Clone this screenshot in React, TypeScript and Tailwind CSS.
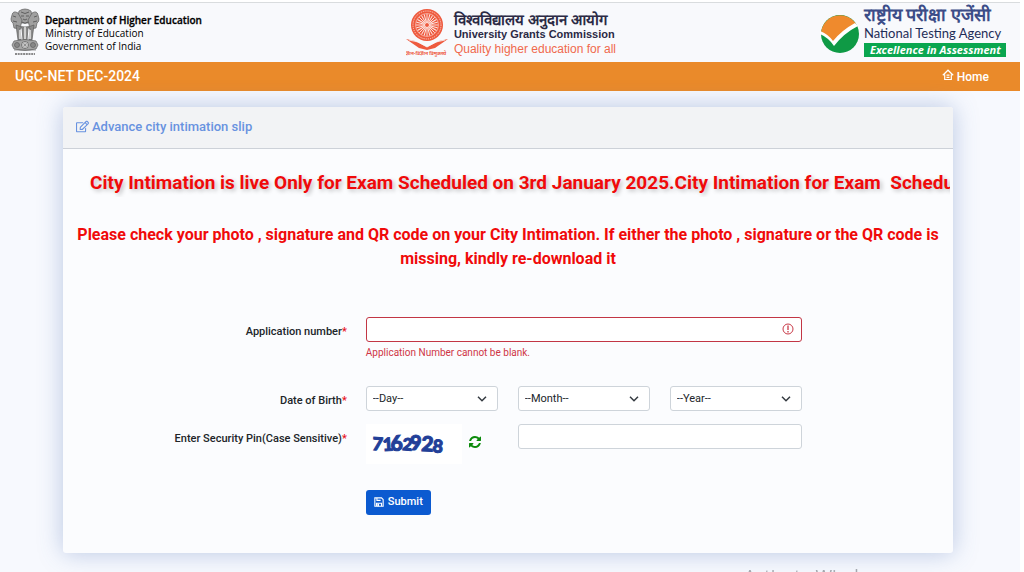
import { useState } from "react";
import { FaRegEdit } from "react-icons/fa";

const spokes = Array.from({ length: 24 }, (_, i) => i * 15);

const captcha = [
  { char: "7", x: 6, y: 26, size: 18, turn: 4 },
  { char: "1", x: 17, y: 27, size: 18, turn: -3 },
  { char: "6", x: 25, y: 27, size: 21, turn: -4 },
  { char: "2", x: 36, y: 26, size: 17, turn: 5 },
  { char: "9", x: 44, y: 26, size: 20, turn: 0 },
  { char: "2", x: 55, y: 27, size: 21, turn: 3 },
  { char: "8", x: 66, y: 28, size: 18, turn: 6 },
];

function Emblem() {
  return (
    <svg viewBox="0 0 32 48" className="h-12 w-8 shrink-0" fill="#a0a0a0" stroke="#5f5f5f" strokeWidth="0.7">
      <path d="M10 3q6-4 12 0l1 5-2 7H11L9 8z" />
      <path d="M9 5Q4 2 3 7l-1 4q0 3 2 4l1 5 6 1 2-9z" />
      <path d="M23 5q5-3 6 2l1 4q0 3-2 4l-1 5-6 1-2-9z" />
      <path d="M12 4q4 3 8 0M12 8h3M17 8h3M14 11q2 2 4 0M13 14q3 3 6 0M4 8l3 1M28 8l-3 1M4 13l4 1M28 13l-4 1" fill="none" stroke="#444" />
      <path d="M7 17l2 15h3l-1-12h2l1 12h4l1-12h2l-1 12h3l2-15q-9 4-18 0z" fill="#8a8a8a" />
      <path d="M11 22v9M16 19v12M21 22v9" stroke="#eee" strokeWidth="1.4" />
      <path d="M5 33q11-3 22 0l2 4-2 4q-11 3-22 0l-2-4z" fill="#a5a5a5" />
      <circle cx="16" cy="37" r="3.5" fill="#ddd" stroke="#555" />
      <path d="M16 33.500v7M12.500 37h7M13.500 34.500l5 5M18.500 34.500l-5 5" strokeWidth="0.4" />
      <circle cx="8" cy="37" r="2.5" fill="#888" />
      <circle cx="24" cy="37" r="2.5" fill="#888" />
      <path d="M5 42h22" stroke="#777" />
      <path d="M6 46h20" stroke="#666" strokeWidth="1.5" strokeDasharray="2 0.7" />
    </svg>
  );
}

function UgcLogo() {
  return (
    <svg viewBox="0 0 42 48" className="h-12 w-[42px] shrink-0" fill="none" stroke="#ee5a3e">
      <path d="M0 30l9 2 12 6 12-6 9-2-13 9-8 2-8-2z" fill="#ee5a3e" stroke="none" />
      <circle cx="21" cy="16" r="16" fill="#ee5a3e" stroke="none" />
      <circle cx="21" cy="16" r="14" stroke="#fbd9d2" strokeWidth="0.9" strokeDasharray="1.2 1" />
      <circle cx="21" cy="16" r="11.5" stroke="#fbd9d2" strokeWidth="0.6" />
      {spokes.map((deg) => (
        <path
          key={deg}
          d="M21 13V5"
          stroke="#fdeae6"
          strokeWidth="0.9"
          transform={`rotate(${deg} 21 16)`}
        />
      ))}
      <circle cx="21" cy="16" r="2.5" fill="#ee5a3e" stroke="#fff" strokeWidth="0.9" />
      <path d="M3 31l9 2 9 5 9-5 9-2" stroke="#f8f9fc" strokeWidth="0.8" />
      <text
        x="20"
        y="46"
        textAnchor="middle"
        fontSize="5"
        fontWeight="700"
        fill="#ee5a3e"
        stroke="none"
        fontFamily="'Noto Sans', sans-serif">
        ज्ञान-विज्ञान विमुक्तये
      </text>
    </svg>
  );
}

function NtaLogo() {
  return (
    <svg viewBox="0 0 40 40" className="size-10 shrink-0">
      <circle cx="20" cy="20" r="19" fill="#0f9a45" />
      <path d="M1 20a19 19 0 0 1 35-10Q22 18 13 29 8 22 1 20z" fill="#ef8a2d" />
      <path d="M0 17q8 3 13 10Q22 16 35 9l3 3Q24 19 14 32 9 24 0 20z" fill="#fff" />
    </svg>
  );
}

function Header() {
  return (
    <header className="flex h-[60px] items-start justify-between border-t border-[#d9dcde] bg-[#f8f9fc] pr-3.5 pl-[9px]">
      <div className="flex pt-[5px]">
        <Emblem />
        <div className="pt-1.5 pl-1 font-['Open_Sans',sans-serif] text-[10px] leading-[13px] text-black">
          <p className="font-semibold [-webkit-text-stroke:0.3px_black]">Department of Higher Education</p>
          <p>Ministry of Education</p>
          <p>Government of India</p>
        </div>
      </div>

      <div className="flex gap-1.5 pt-1.5">
        <UgcLogo />
        <div className="pt-[3px] font-['Liberation_Sans',sans-serif] text-[11px] leading-[15px] text-[#2b2a45]">
          <p className="text-[15px] font-semibold">विश्वविद्यालय अनुदान आयोग</p>
          <p className="font-bold">University Grants Commission</p>
          <p className="text-[12px] leading-[14px] text-[#f0694c]">Quality higher education for all</p>
        </div>
      </div>

      <div className="flex gap-1">
        <div className="pt-[11px]">
          <NtaLogo />
        </div>
        <div className="w-[142px] pt-1 text-[#25356f]">
          <p className="text-[18px] leading-4 font-semibold whitespace-nowrap text-[#3c4d88]">राष्ट्रीय परीक्षा एजेंसी</p>
          <p className="font-['Lato',sans-serif] text-[13px] leading-5 whitespace-nowrap text-[#1f2d57]">
            National Testing Agency
          </p>
          <p className="h-3.5 bg-[#0aa64f] px-1.5 font-['Noto_Sans',sans-serif] text-[11px] leading-3.5 font-bold whitespace-nowrap text-white italic">
            Excellence in Assessment
          </p>
        </div>
      </div>
    </header>
  );
}

function HomeIcon() {
  return (
    <svg viewBox="0 0 12 12" className="mb-1 size-3" fill="none" stroke="currentColor" strokeWidth="1.2">
      <path d="M.8 6.200L6 1.200l5.200 5M2.700 5.500v5h6.600v-5" />
      <path d="M4.500 6.200h3M4.500 8.300h3" />
    </svg>
  );
}

function RefreshIcon() {
  return (
    <svg viewBox="0 0 1536 1536" className="size-3" fill="currentColor">
      <path d="M1511 928q0 5-1 7-64 268-268 434.500T764 1536q-146 0-282.500-55T238 1324l-129 129q-19 19-45 19t-45-19-19-45V960q0-26 19-45t45-19h448q26 0 45 19t19 45-19 45l-137 137q71 66 161 102t187 36q134 0 250-65t186-179q11-17 53-117 8-23 30-23h192q13 0 22.500 9.500t9.500 22.500zm25-800v448q0 26-19 45t-45 19h-448q-26 0-45-19t-19-45 19-45l138-138Q969 256 768 256q-134 0-250 65T332 500q-11 17-53 117-8 23-30 23H50q-13 0-22.500-9.500T18 608v-7q65-268 270-434.500T768 0q146 0 284 55.500T1297 212l130-129q19-19 45-19t45 19 19 45z" />
    </svg>
  );
}

function SaveIcon() {
  return (
    <svg viewBox="0 0 12 12" className="mb-0.5 size-2.5" fill="none" stroke="currentColor" strokeWidth="1.3">
      <path d="M1 1h8l2 2v8H1zM3.500 1v3h4.500M3 11V7.500h6V11" />
      <path d="M4 8h2v3H4z" fill="currentColor" stroke="none" />
    </svg>
  );
}

function Label({ id, text }: { id: string; text: string }) {
  return (
    <label htmlFor={id} className="pt-[7px] pr-px text-right text-[11px] leading-4 font-medium text-[#212529]">
      {text}
      <span className="text-[#e8101c]">*</span>
    </label>
  );
}

function DateSelect({ id, name }: { id: string; name: string }) {
  return (
    <div className="relative">
      <select
        id={id}
        aria-label={name}
        className="block h-[25px] w-full appearance-none rounded-[3px] border border-[#ced4da] bg-white pt-px pl-1.5 text-[11px] text-[#212529]">
        <option>--{name}--</option>
      </select>
      <svg
        viewBox="0 0 10 6"
        className="pointer-events-none absolute top-2.5 right-[11px] h-1.5 w-2.5"
        fill="none"
        stroke="#343a40"
        strokeWidth="1.5">
        <path d="M1 .8l4 4 4-4" />
      </svg>
    </div>
  );
}

function SlipForm() {
  const [appNo, setAppNo] = useState("");
  const [pin, setPin] = useState("");

  return (
    <form className="grid grid-cols-[32%_49%] gap-x-[18px] pb-[38px]" onSubmit={(e) => e.preventDefault()}>
      <Label id="appno" text="Application number" />
      <div className="h-[69px]">
        <div className="relative">
          <input
            id="appno"
            type="text"
            value={appNo}
            onChange={(e) => setAppNo(e.target.value)}
            className="block h-[25px] w-full rounded-[3px] border border-[#c23645] bg-white px-2 text-[11px] outline-none"
          />
          <svg
            viewBox="0 0 12 12"
            className="absolute top-1.5 right-2 size-3"
            fill="none"
            stroke="#c93a48">
            <circle cx="6" cy="6" r="5" />
            <path d="M6 2.500v4.500M6 8v1.500" strokeWidth="1.3" />
          </svg>
        </div>
        <p className="pt-[3px] text-[10px] leading-4 text-[#cf3545]">Application Number cannot be blank.</p>
      </div>

      <Label id="day" text="Date of Birth" />
      <div className="grid h-[38px] grid-cols-3 gap-x-5">
        <DateSelect id="day" name="Day" />
        <DateSelect id="month" name="Month" />
        <DateSelect id="year" name="Year" />
      </div>

      <Label id="pin" text="Enter Security Pin(Case Sensitive)" />
      <div className="grid h-[66px] grid-cols-3 gap-x-5">
        <div className="flex items-start">
          <svg viewBox="0 0 96 40" className="h-10 w-24 bg-white" role="img" aria-label="Security pin">
            {captcha.map((c) => (
              <text
                key={c.x}
                x={c.x}
                y={c.y}
                fontSize={c.size}
                fontWeight="900"
                fontFamily="Lato, sans-serif"
                fill="#223f98"
                stroke="#223f98"
                strokeWidth="1"
                transform={`rotate(${c.turn} ${c.x} ${c.y})`}>
                {c.char}
              </text>
            ))}
          </svg>
          <button type="button" aria-label="Refresh pin" className="mt-3 ml-[7px] text-[#0b8a0b]">
            <RefreshIcon />
          </button>
        </div>
        <input
          id="pin"
          type="text"
          value={pin}
          onChange={(e) => setPin(e.target.value)}
          className="col-span-2 h-[25px] w-full rounded-[3px] border border-[#ced4da] bg-white px-2 text-[11px]"
        />
      </div>

      <button
        type="submit"
        className="col-start-2 flex h-[25px] items-center gap-1 justify-self-start rounded-[3px] bg-[#0b5ad0] px-2 text-[11px] font-medium text-white">
        <SaveIcon />
        Submit
      </button>
    </form>
  );
}

function App() {
  return (
    <div className="h-screen overflow-hidden bg-white pt-0.5 pr-1 font-['Roboto',sans-serif]">
      <Header />
      <nav className="flex h-[29px] items-center justify-between bg-[#ea8a2a] pr-[31px] pl-[15px] text-white">
        <p className="text-[14px] font-medium">UGC-NET DEC-2024</p>
        <a href="#" className="flex items-center gap-[3px] text-[12px] font-medium">
          <HomeIcon />
          Home
        </a>
      </nav>

      <main className="min-h-full bg-[#f7f9fe] pt-4 pr-[67px] pl-[63px]">
        <section className="rounded-[3px] bg-[#fbfcfe] shadow-[0_0_24px_rgba(70,105,175,0.35)]">
          <h1 className="flex h-[42px] items-center gap-[3px] rounded-t-[3px] border-b border-[#cdd1d8] bg-[#f2f3f5] pb-0.5 pl-[13px] text-[13px] font-medium text-[#6892e0]">
            <FaRegEdit />
            Advance city intimation slip
          </h1>
          <div className="mr-[3px] overflow-hidden pt-5 pl-[27px]">
            <p className="text-[19px] leading-7 font-bold whitespace-pre text-[#f00a0a] [text-shadow:2px_2px_4px_rgba(0,0,0,0.25)]">
              City Intimation is live Only for Exam Scheduled on 3rd January 2025.City Intimation for Exam  Scheduled on
            </p>
          </div>
          <p className="px-3 pt-[26px] pb-[46px] text-center text-[16px] leading-6 font-bold text-[#f00a0a]">
            Please check your photo , signature and QR code on your City Intimation. If either the photo ,
            signature or the QR code is missing, kindly re-download it
          </p>
          <SlipForm />
        </section>
      </main>

      <div className="pointer-events-none fixed right-[132px] bottom-0 h-1 overflow-hidden font-['Open_Sans',sans-serif] text-[18px] leading-4 text-[#a3a7ad]">
        Activate Windows
      </div>
    </div>
  );
}

export default App;
